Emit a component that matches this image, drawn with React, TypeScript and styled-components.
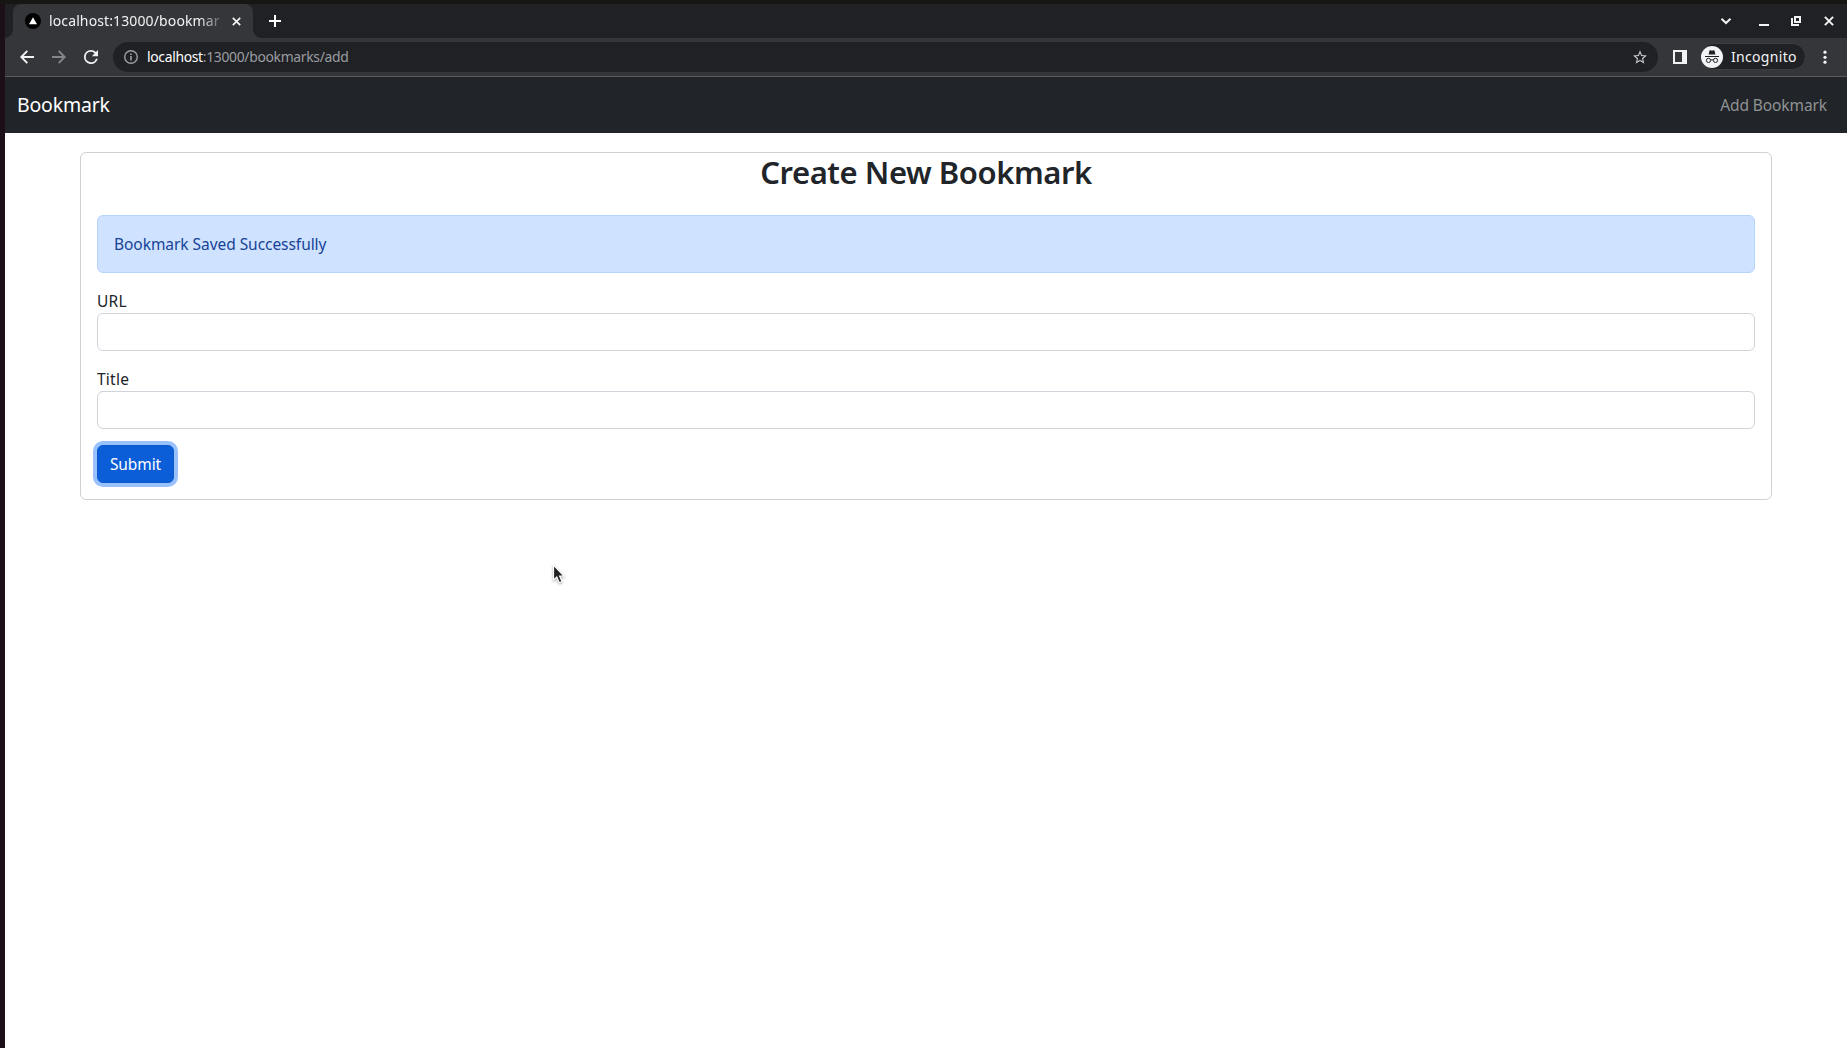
import React from "react";
import styled, { createGlobalStyle } from "styled-components";

const GlobalStyle = createGlobalStyle`
  *, *::before, *::after { box-sizing: border-box; }
  html, body { margin: 0; padding: 0; overflow: hidden; }
  body { font-family: "Noto Sans", "Open Sans", sans-serif; background: #fff; }
  svg { display: block; flex: none; }
`;

const Desktop = styled.div`
  width: 100vw;
  height: 100vh;
  display: flex;
  padding: 4px 0 0 5px;
  background: linear-gradient(to bottom, #161614 0 4px, #1c0f18 4px);
`;
const Window = styled.div`
  flex: 1;
  min-width: 0;
  display: flex;
  flex-direction: column;
  background: #fff;
`;
const TabStrip = styled.div`
  height: 34px;
  display: flex;
  align-items: center;
  padding: 0 13px 0 8px;
  background: #202124;
`;
const Tab = styled.div`
  position: relative;
  width: 240px;
  height: 34px;
  display: flex;
  align-items: center;
  padding-left: 12px;
  background: #35363a;
  border-radius: 8px 8px 0 0;
  &::before, &::after {
    content: "";
    position: absolute;
    bottom: 0;
    width: 8px;
    height: 8px;
  }
  &::before { left: -8px; background: radial-gradient(circle at 0 0, transparent 7.5px, #35363a 8px); }
  &::after { right: -8px; background: radial-gradient(circle at 100% 0, transparent 7.5px, #35363a 8px); }
`;
const TabTitle = styled.div`
  width: 175px;
  margin: 0 8px 0 8px;
  white-space: nowrap;
  font-size: 14px;
  line-height: 20px;
  letter-spacing: 0.12px;
  color: #f1f3f4;
  mask-image: linear-gradient(to right, #000 150px, transparent 178px);
`;
const NewTab = styled.div`
  margin-left: 16px;
`;
const WindowButtons = styled.div`
  margin-left: auto;
  display: flex;
  align-items: center;
  gap: 22px;
`;
const Toolbar = styled.div`
  height: 39px;
  display: flex;
  align-items: center;
  padding: 0 15px 1px 15px;
  background: #35363a;
  border-bottom: 1px solid #5b5c60;
`;
const NavButtons = styled.div`
  display: flex;
  gap: 18px;
`;
const AddressBar = styled.div`
  flex: 1;
  height: 30px;
  margin-left: 15px;
  padding: 0 11px;
  display: flex;
  align-items: center;
  border-radius: 15px;
  background: #202124;
`;
const Address = styled.div`
  flex: 1;
  margin-left: 9px;
  font-size: 13.9px;
  line-height: 20px;
  letter-spacing: -0.32px;
  color: #9a9da1;
`;
const Host = styled.span`
  color: #fff;
`;
const PanelIcon = styled.div`
  width: 14px;
  height: 14px;
  margin: 0 13px 0 15px;
  border: 2px solid #f1f3f4;
  border-right-width: 5px;
`;
const Profile = styled.div`
  width: 106px;
  height: 27px;
  display: flex;
  align-items: center;
  padding-left: 0;
  border-radius: 14px;
  background: #202124;
  border: 1px solid #3c3d41;
`;
const ProfileName = styled.span`
  margin-left: 8px;
  font-size: 14px;
  line-height: 20px;
  letter-spacing: 0.32px;
  color: #f1f3f4;
`;
const Menu = styled.div`
  margin-left: 12px;
`;
const Navbar = styled.nav`
  height: 56px;
  display: flex;
  align-items: center;
  justify-content: space-between;
  padding: 0 20px 0 12px;
  background: #212529;
`;
const Brand = styled.span`
  font-size: 19.5px;
  line-height: 30px;
  letter-spacing: -0.2px;
  color: #fff;
`;
const NavLink = styled.span`
  font-size: 15.5px;
  line-height: 24px;
  letter-spacing: -0.1px;
  color: #909294;
`;
const Page = styled.main`
  flex: 1;
  padding: 19px 75px 0;
`;
const Card = styled.section`
  height: 348px;
  display: flex;
  flex-direction: column;
  padding: 0 16px;
  border: 1px solid #d0d1d2;
  border-radius: 6px;
`;
const Heading = styled.h2`
  margin: 0 0 24px;
  height: 38px;
  text-align: center;
  font-size: 31px;
  line-height: 38px;
  letter-spacing: -0.45px;
  font-weight: 600;
  color: #212529;
`;
const Alert = styled.div`
  height: 58px;
  padding: 16px;
  margin-bottom: 16px;
  border: 1px solid #b6d4fe;
  border-radius: 6px;
  background: #cfe2ff;
  color: #164298;
  font-size: 15.5px;
  line-height: 24px;
  letter-spacing: -0.05px;
`;
const Field = styled.label`
  display: flex;
  flex-direction: column;
  margin-bottom: 16px;
`;
const FieldLabel = styled.span`
  font-size: 15.5px;
  line-height: 24px;
  letter-spacing: 0.25px;
  color: #212529;
`;
const Input = styled.input`
  width: 100%;
  height: 38px;
  border: 1px solid #ced4da;
  border-radius: 6px;
  background: #fff;
`;
const Submit = styled.button`
  align-self: flex-start;
  width: 77px;
  height: 38px;
  padding: 0;
  border: 1px solid #0a58ca;
  border-radius: 6px;
  background: #0b5ed7;
  box-shadow: 0 0 0 4px #98c1fe;
  color: #fff;
  font-family: inherit;
  font-size: 15.5px;
  line-height: 24px;
  letter-spacing: -0.1px;
`;
const Pointer = styled.div`
  position: absolute;
  left: 552px;
  top: 564px;
  filter: drop-shadow(0 1px 1px rgba(0, 0, 0, 0.35));
`;

const Favicon = () => (
  <svg width="16" height="16" viewBox="0 0 16 16">
    <circle cx="8" cy="8" r="8" fill="#000" />
    <path d="M8 4.2 L12 11.2 H4 Z" fill="#fff" />
  </svg>
);

export default function App() {
  return (
    <>
      <GlobalStyle />
      <Desktop>
        <Window>
          <TabStrip>
            <Tab>
              <Favicon />
              <TabTitle>localhost:13000/bookmar</TabTitle>
              <svg width="9" height="9" viewBox="0 0 9 9" stroke="#f1f3f4" strokeWidth="1.7">
                <path d="M.8 .8 L8.2 8.2 M8.2 .8 L.8 8.2" />
              </svg>
            </Tab>
            <NewTab>
              <svg width="12" height="12" viewBox="0 0 12 12" fill="#fff">
                <path d="M5 0h2v5h5v2H7v5H5V7H0V5h5z" />
              </svg>
            </NewTab>
            <WindowButtons>
              <svg width="17" height="12" viewBox="0 0 17 12" fill="none" stroke="#f1f3f4" strokeWidth="2">
                <path d="M1.5 3.7 L6 8 L10.5 3.7" />
              </svg>
              <svg width="10" height="12" viewBox="0 0 10 12" fill="#f1f3f4">
                <path d="M0 9h10v2H0z" />
              </svg>
              <svg width="11" height="10" viewBox="0 0 11 10" fill="#f1f3f4">
                <path d="M3 0h7v7H3z M5 2v3h3V2z" fillRule="evenodd" />
                <path d="M0 2h2v6h6v2H0z" />
              </svg>
              <svg width="10" height="10" viewBox="0 0 10 10" stroke="#f1f3f4" strokeWidth="2">
                <path d="M.9 .9 L9.1 9.1 M9.1 .9 L.9 9.1" />
              </svg>
            </WindowButtons>
          </TabStrip>
          <Toolbar>
            <NavButtons>
              <svg width="14" height="14" viewBox="0 0 14 14" fill="none" stroke="#f1f3f4" strokeWidth="1.9">
                <path d="M14 7H1.8M7.3 .8L1.3 7l6 6.2" />
              </svg>
              <svg width="14" height="14" viewBox="0 0 14 14" fill="none" stroke="#85868a" strokeWidth="1.9">
                <path d="M0 7h12.2M6.7 .8l6 6.2-6 6.2" />
              </svg>
              <svg width="14" height="14" viewBox="4 4 16 16" fill="#f1f3f4">
                <path d="M17.65 6.35A7.96 7.96 0 0 0 12 4a8 8 0 1 0 7.73 10h-2.08A6 6 0 1 1 12 6c1.66 0 3.14.69 4.22 1.78L13 11h7V4z" />
              </svg>
            </NavButtons>
            <AddressBar>
              <svg width="14" height="14" viewBox="0 0 14 14">
                <circle cx="7" cy="7" r="6.3" fill="none" stroke="#9aa0a6" strokeWidth="1.4" />
                <path d="M6.2 3.4h1.6v1.6H6.2zM6.2 6.1h1.6v4.5H6.2z" fill="#9aa0a6" />
              </svg>
              <Address>
                <Host>localhost</Host>:13000/bookmarks/add
              </Address>
              <svg width="14" height="14" viewBox="2 2 20 19" fill="#c5c8cb">
                <path d="M22 9.24l-7.19-.62L12 2 9.19 8.63 2 9.24l5.46 4.73L5.82 21 12 17.27 18.18 21l-1.63-7.03L22 9.24zM12 15.4l-3.76 2.27 1-4.28-3.32-2.88 4.38-.38L12 6.1l1.71 4.04 4.38.38-3.32 2.88 1 4.28L12 15.4z" />
              </svg>
            </AddressBar>
            <PanelIcon />
            <Profile>
              <svg width="22" height="22" viewBox="0 0 22 22">
                <circle cx="11" cy="11" r="11" fill="#f1f3f4" />
                <path d="M7.6 8.6 L8.5 4.6 Q8.7 4 9.4 4.2 L11 4.7 L12.6 4.2 Q13.3 4 13.5 4.6 L14.4 8.6 Z M4 9.9h14v1H4z" fill="#202124" />
                <g fill="none" stroke="#202124" strokeWidth="1">
                  <circle cx="7.5" cy="14.4" r="2.1" />
                  <circle cx="14.5" cy="14.4" r="2.1" />
                  <path d="M9.6 14.2 Q11 13.2 12.4 14.2" />
                </g>
              </svg>
              <ProfileName>Incognito</ProfileName>
            </Profile>
            <Menu>
              <svg width="14" height="14" viewBox="0 0 14 14" fill="#f1f3f4">
                <circle cx="7" cy="2.2" r="1.6" />
                <circle cx="7" cy="7.3" r="1.6" />
                <circle cx="7" cy="12.2" r="1.6" />
              </svg>
            </Menu>
          </Toolbar>
          <Navbar>
            <Brand>Bookmark</Brand>
            <NavLink>Add Bookmark</NavLink>
          </Navbar>
          <Page>
            <Card>
              <Heading>Create New Bookmark</Heading>
              <Alert>Bookmark Saved Successfully</Alert>
              <Field>
                <FieldLabel>URL</FieldLabel>
                <Input />
              </Field>
              <Field>
                <FieldLabel>Title</FieldLabel>
                <Input />
              </Field>
              <Submit>Submit</Submit>
            </Card>
          </Page>
        </Window>
      </Desktop>
      <Pointer>
        <svg width="14" height="22" viewBox="0 0 14 22">
          <path d="M1.5 1 V16 L4.8 13 L7.3 18.7 L10 17.5 L7.6 12 H12 Z" fill="#222" stroke="#fff" strokeWidth="1.2" />
        </svg>
      </Pointer>
    </>
  );
}
